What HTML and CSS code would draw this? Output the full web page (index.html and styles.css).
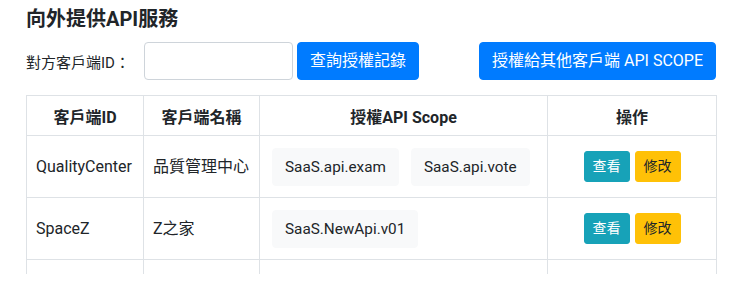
FILE: index.html
```html
<!DOCTYPE html>
<html lang="zh-Hant">
<head>
<meta charset="utf-8">
<title>向外提供API服務</title>
<link rel="stylesheet" href="styles.css">
</head>
<body>
<div class="page">
  <h5 class="title">向外提供API服務</h5>
  <div class="toolbar">
    <label class="label" for="cid">對方客戶端ID：</label>
    <input id="cid" class="input" type="text">
    <button class="btn btn-primary btn-query">查詢授權記錄</button>
    <button class="btn btn-primary btn-grant">授權給其他客戶端 API SCOPE</button>
  </div>
  <table class="table">
    <colgroup>
      <col class="c1"><col class="c2"><col class="c3"><col class="c4">
    </colgroup>
    <thead>
      <tr><th>客戶端ID</th><th>客戶端名稱</th><th>授權API Scope</th><th>操作</th></tr>
    </thead>
    <tbody>
      <tr>
        <td>QualityCenter</td>
        <td>品質管理中心</td>
        <td><div class="tags"><span class="tag">SaaS.api.exam</span><span class="tag">SaaS.api.vote</span></div></td>
        <td class="ops"><button class="btn btn-sm btn-info">查看</button><button class="btn btn-sm btn-warning">修改</button></td>
      </tr>
      <tr>
        <td>SpaceZ</td>
        <td>Z之家</td>
        <td><div class="tags"><span class="tag">SaaS.NewApi.v01</span></div></td>
        <td class="ops"><button class="btn btn-sm btn-info">查看</button><button class="btn btn-sm btn-warning">修改</button></td>
      </tr>
      <tr class="row-cut">
        <td></td>
        <td></td>
        <td></td>
        <td></td>
      </tr>
    </tbody>
  </table>
</div>
</body>
</html>
```

FILE: styles.css
```css
html, body {
  margin: 0;
  padding: 0;
  background: #fff;
  overflow: hidden;
}
body {
  font-family: Roboto, "Noto Sans CJK TC", sans-serif;
  color: #212529;
  font-size: 16px;
}
.page {
  width: 692px;
  margin-left: 26px;
  padding-top: 7px;
  height: 267px;
  overflow: hidden;
}
.title {
  margin: 0 0 11px 0;
  font-size: 20px;
  line-height: 24px;
  font-weight: 700;
}
.toolbar {
  display: flex;
  align-items: center;
  height: 38px;
  width: 690px;
}
.label {
  font-size: 15px;
  margin-right: 14px;
  white-space: nowrap;
}
.input {
  box-sizing: border-box;
  width: 149px;
  height: 38px;
  border: 1px solid #ced4da;
  border-radius: 4px;
  padding: 6px 12px;
  font: inherit;
  margin: 0;
}
.btn {
  box-sizing: border-box;
  font-family: inherit;
  font-size: 16px;
  line-height: 24px;
  padding: 6px 12px;
  border: 1px solid transparent;
  border-radius: 4px;
  cursor: pointer;
  white-space: nowrap;
}
.btn-primary {
  background: #007bff;
  border-color: #007bff;
  color: #fff;
}
.btn-query {
  margin-left: 4px;
  width: 122px;
  height: 38px;
}
.btn-grant {
  margin-left: auto;
  height: 38px;
}
.table {
  margin-top: 15px;
  width: 690px;
  border-collapse: collapse;
  table-layout: fixed;
}
.c1 { width: 117px; }
.c2 { width: 116px; }
.c3 { width: 288px; }
.c4 { width: 169px; }
.table th, .table td {
  border: 1px solid #dee2e6;
  vertical-align: middle;
  white-space: nowrap;
}
.table th {
  height: 40px;
  padding: 0 8px;
  font-weight: 700;
  text-align: center;
  box-sizing: border-box;
}
.table td {
  height: 62px;
  padding: 0 9px;
  box-sizing: border-box;
  line-height: 24px;
}
.tags {
  display: flex;
  gap: 12px;
  padding-left: 3px;
}
.tag {
  box-sizing: border-box;
  display: inline-block;
  height: 38px;
  line-height: 24px;
  padding: 6px 12px;
  border: 1px solid #f8f9fa;
  background: #f8f9fa;
  border-radius: 4px;
  color: #212529;
  font-size: 15.3px;
}
.ops {
  text-align: center;
}
.ops .btn + .btn {
  margin-left: 5px;
}
.btn-sm {
  font-size: 14px;
  line-height: 21px;
  padding: 4px 8px;
  border-radius: 3px;
}
.btn-info {
  background: #17a2b8;
  border-color: #17a2b8;
  color: #fff;
}
.btn-warning {
  background: #ffc107;
  border-color: #ffc107;
  color: #212529;
}
```
